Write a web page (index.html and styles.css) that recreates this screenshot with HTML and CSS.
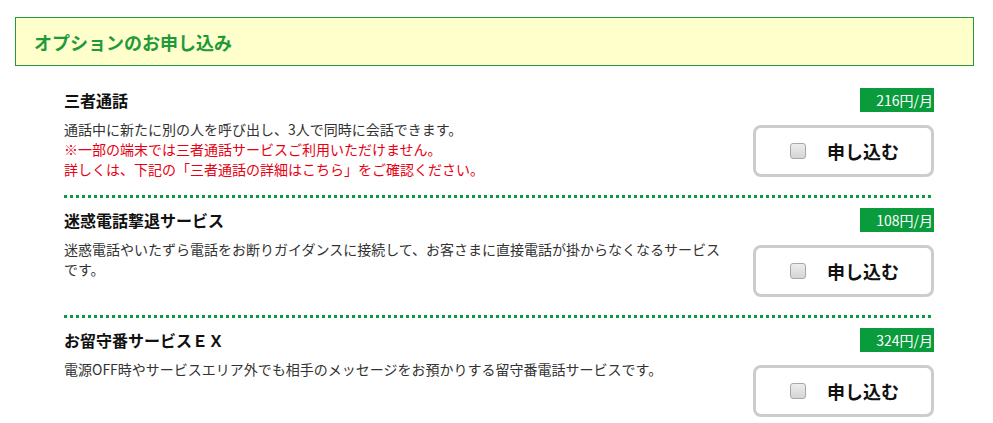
FILE: index.html
```html
<!DOCTYPE html>
<html lang="ja">
<head>
<meta charset="utf-8">
<title>オプションのお申し込み</title>
<link rel="stylesheet" href="styles.css">
</head>
<body>
<div class="page">
  <div class="heading"><h2>オプションのお申し込み</h2></div>
  <div class="options">
    <div class="item">
      <div class="info">
        <h3 class="name">三者通話</h3>
        <p class="desc">通話中に新たに別の人を呼び出し、3人で同時に会話できます。<br><span class="note">※一部の端末では三者通話サービスご利用いただけません。<br>詳しくは、下記の「三者通話の詳細はこちら」をご確認ください。</span></p>
      </div>
      <div class="side">
        <div class="price">216円/月</div>
        <label class="apply"><span class="check"></span><span class="label">申し込む</span></label>
      </div>
    </div>
    <div class="item">
      <div class="info">
        <h3 class="name">迷惑電話撃退サービス</h3>
        <p class="desc">迷惑電話やいたずら電話をお断りガイダンスに接続して、お客さまに直接電話が掛からなくなるサービスです。</p>
      </div>
      <div class="side">
        <div class="price">108円/月</div>
        <label class="apply"><span class="check"></span><span class="label">申し込む</span></label>
      </div>
    </div>
    <div class="item last">
      <div class="info">
        <h3 class="name">お留守番サービスＥＸ</h3>
        <p class="desc">電源OFF時やサービスエリア外でも相手のメッセージをお預かりする留守番電話サービスです。</p>
      </div>
      <div class="side">
        <div class="price">324円/月</div>
        <label class="apply"><span class="check"></span><span class="label">申し込む</span></label>
      </div>
    </div>
  </div>
</div>
</body>
</html>
```
FILE: styles.css
```css
html, body {
  margin: 0;
  padding: 0;
  background: #fff;
}
body {
  font-family: "Noto Sans CJK JP", "Noto Sans", sans-serif;
  color: #333;
}
.page {
  width: 959px;
  padding: 17px 0 0 15px;
}
.heading {
  height: 47px;
  border: 1px solid #259a3c;
  background: #ffffcc;
  display: flex;
  align-items: center;
  padding-left: 18px;
}
.heading h2 {
  margin: 0;
  font-size: 18px;
  font-weight: bold;
  color: #1f9a3a;
  line-height: 24px;
}
.options {
  margin: 22px 40px 0 49px;
}
.item {
  display: flex;
  padding-bottom: 3px;
  margin-bottom: 10px;
  background: linear-gradient(to right, #0a9b45 50%, transparent 50%) left bottom / 6px 3px repeat-x;
}
.item.last {
  background: none;
  margin-bottom: 0;
  padding-bottom: 0;
}
.item.last .side {
  padding-bottom: 0;
}
.info {
  flex: 1;
  margin-right: 23px;
}
.name {
  margin: 0;
  font-size: 16px;
  font-weight: bold;
  line-height: 24px;
  color: #111;
}
.desc {
  margin: 7px 0 0;
  font-size: 14px;
  line-height: 20px;
  color: #333;
}
.note {
  color: #e60012;
}
.side {
  width: 181px;
  display: flex;
  flex-direction: column;
  align-items: flex-end;
  padding-bottom: 18px;
}
.price {
  width: 74px;
  height: 24px;
  line-height: 24px;
  background: #0a9b3c;
  color: #fff;
  font-size: 14px;
  text-align: right;
  padding-right: 1px;
  box-sizing: border-box;
}
.apply {
  margin-top: 13px;
  width: 181px;
  height: 52px;
  box-sizing: border-box;
  border: 3px solid #cccccc;
  border-radius: 8px;
  background: #fff;
  display: flex;
  align-items: center;
  justify-content: center;
  gap: 21px;
  padding-left: 2px;
}
.check {
  width: 16px;
  height: 16px;
  box-sizing: border-box;
  border: 1px solid #a8a8a8;
  border-radius: 3px;
  background: linear-gradient(#ededed, #d4d4d4);
}
.label {
  font-size: 18px;
  font-weight: bold;
  color: #111;
  line-height: 24px;
}
```
